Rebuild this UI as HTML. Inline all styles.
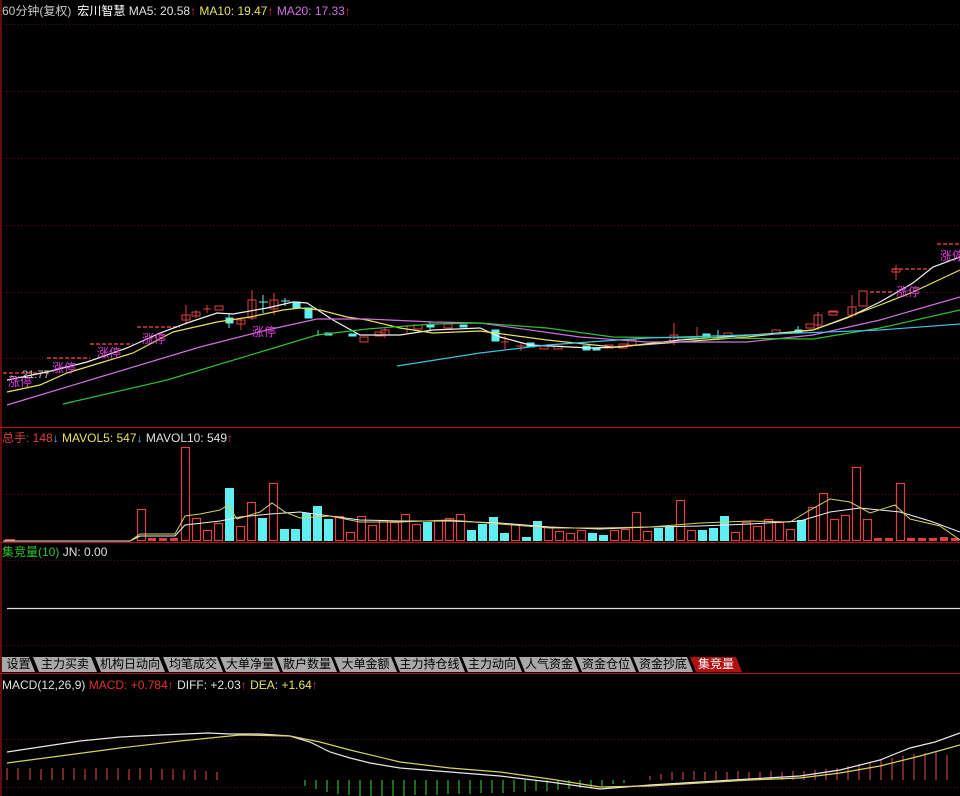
<!DOCTYPE html>
<html><head><meta charset="utf-8"><style>
html,body{margin:0;padding:0;background:#000;width:960px;height:796px;overflow:hidden}
body{position:relative;font-family:"Liberation Sans","Noto Sans CJK SC",sans-serif;font-size:12px}
.t{position:absolute;white-space:nowrap;font-size:12px;line-height:14px}
.tab{position:absolute;top:657px;height:15px;background:#a8a8a8;color:#000;font-size:12px;line-height:15px;text-align:center;clip-path:polygon(0 0,calc(100% - 6px) 0,100% 100%,6px 100%)}
</style></head><body>
<svg width="960" height="796" style="position:absolute;left:0;top:0" xmlns="http://www.w3.org/2000/svg">
<g stroke="#5a1010" stroke-dasharray="1,2" stroke-width="1">
<line x1="3" y1="24.5" x2="960" y2="24.5"/><line x1="3" y1="91.5" x2="960" y2="91.5"/><line x1="3" y1="158.5" x2="960" y2="158.5"/><line x1="3" y1="225.5" x2="960" y2="225.5"/><line x1="3" y1="292.5" x2="960" y2="292.5"/><line x1="3" y1="358.5" x2="960" y2="358.5"/>
<line x1="3" y1="494.5" x2="960" y2="494.5"/><line x1="3" y1="560.5" x2="960" y2="560.5"/><line x1="3" y1="645.5" x2="960" y2="645.5"/><line x1="3" y1="739.5" x2="960" y2="739.5"/><line x1="3" y1="787.5" x2="960" y2="787.5"/>
</g>
<g stroke="#a01818" stroke-width="1.2">
<line x1="1" y1="0" x2="1" y2="796"/>
<line x1="0" y1="427.5" x2="960" y2="427.5"/><line x1="0" y1="542.5" x2="960" y2="542.5"/><line x1="0" y1="673.5" x2="960" y2="673.5"/>
</g>
<g stroke="#d04040" stroke-dasharray="4,2" stroke-width="1.5">
<line x1="3" y1="373" x2="50" y2="373"/><line x1="47" y1="358" x2="90" y2="358"/><line x1="90" y1="344" x2="133" y2="344"/><line x1="137" y1="327" x2="180" y2="327"/><line x1="870" y1="292" x2="893" y2="292"/><line x1="893" y1="269" x2="930" y2="269"/><line x1="937" y1="244" x2="960" y2="244"/>
</g>
<g stroke="#e04040" fill="none" stroke-width="1">
<line x1="186" y1="305" x2="186" y2="323"/><rect x="182" y="315" width="8" height="5"/>
<line x1="196" y1="310" x2="196" y2="318"/><rect x="192" y="312" width="8" height="4"/>
<line x1="203" y1="309" x2="211" y2="309"/><line x1="207" y1="305" x2="207" y2="313"/>
<rect x="215" y="306" width="8" height="4"/>
<line x1="241" y1="318" x2="241" y2="330"/><rect x="237" y="320" width="8" height="4"/>
<line x1="252" y1="290" x2="252" y2="320"/><rect x="248" y="300" width="8" height="18"/>
<line x1="274" y1="293" x2="274" y2="315"/><rect x="270" y="300" width="8" height="9"/>
<rect x="360" y="337" width="8" height="5"/><rect x="375" y="332" width="8" height="4"/>
<line x1="385" y1="328" x2="385" y2="338"/><rect x="381" y="330" width="8" height="5"/>
<line x1="407" y1="325" x2="407" y2="333"/>
<rect x="414" y="325" width="8" height="4"/><rect x="444" y="324" width="8" height="4"/>
<line x1="505" y1="336" x2="505" y2="349"/><line x1="501" y1="342" x2="509" y2="342"/>
<line x1="521" y1="343" x2="521" y2="351"/><line x1="516" y1="346" x2="526" y2="346"/>
<rect x="540" y="346" width="8" height="3"/><rect x="554" y="346" width="8" height="3"/>
<rect x="605" y="345" width="8" height="3"/><rect x="619" y="344" width="8" height="4"/>
<rect x="628" y="340" width="8" height="5"/><line x1="674" y1="323" x2="674" y2="345"/><rect x="670" y="335" width="8" height="7"/>
<line x1="697" y1="327" x2="697" y2="338"/><rect x="724" y="333" width="8" height="3"/>
<rect x="772" y="330" width="8" height="4"/><rect x="806" y="324" width="8" height="4"/>
<line x1="818" y1="312" x2="818" y2="330"/><rect x="814" y="315" width="8" height="10"/>
<rect x="829" y="311" width="8" height="4"/><line x1="828" y1="312" x2="839" y2="312"/>
<line x1="852" y1="295" x2="852" y2="318"/><rect x="848" y="307" width="8" height="8"/>
<rect x="859" y="291" width="8" height="15"/>
<line x1="896" y1="265" x2="896" y2="280"/><rect x="892" y="269" width="8" height="3"/>
</g>
<g fill="#5ef0f0" stroke="#5ef0f0">
<rect x="226" y="318" width="7" height="5"/><line x1="229" y1="314" x2="229" y2="328"/>
<rect x="293" y="302" width="7" height="6"/><line x1="263" y1="295" x2="263" y2="313"/><line x1="259" y1="302" x2="268" y2="302"/>
<line x1="285" y1="298" x2="285" y2="306"/><line x1="281" y1="301" x2="290" y2="301"/>
<rect x="305" y="308" width="7" height="10"/><rect x="325" y="333" width="7" height="2"/><line x1="318" y1="330" x2="318" y2="336"/>
<rect x="349" y="334" width="7" height="2"/><rect x="492" y="330" width="7" height="11"/><rect x="527" y="343" width="7" height="4"/>
<rect x="583" y="346" width="7" height="4"/><rect x="593" y="348" width="7" height="2"/><rect x="460" y="325" width="7" height="2"/>
<rect x="703" y="334" width="7" height="3"/><line x1="718" y1="330" x2="718" y2="340"/><rect x="795" y="330" width="7" height="3"/><line x1="798" y1="326" x2="798" y2="332"/>
<line x1="430" y1="322" x2="430" y2="330"/><rect x="427" y="325" width="7" height="2"/>
</g>
<g fill="none" stroke-width="1.2">
<polyline stroke="#f0f0f0" points="7,380 47,372 87,362 127,348 160,333 187,323 217,313 233,314 267,308 293,302 307,303 333,320 360,335 400,335 433,330 480,328 500,337 530,345 590,348 620,347 680,340 780,333 813,330 847,318 880,302 913,283 933,267 960,257"/>
<polyline stroke="#e8e060" points="7,392 40,385 67,373 100,363 133,353 173,332 217,322 250,317 283,310 300,308 320,310 347,317 367,320 400,328 433,333 480,331 547,340 613,347 680,342 747,337 813,330 880,305 913,292 960,270"/>
<polyline stroke="#d070e0" points="7,405 100,377 200,347 267,330 317,319 367,319 433,322 480,323 580,337 647,342 747,342 813,335 880,320 960,297"/>
<polyline stroke="#30c030" points="63,404 167,380 267,350 317,335 367,329 433,324 480,323 547,328 613,337 713,338 813,339 880,328 960,310"/>
<polyline stroke="#40c0e0" points="397,366 480,353 547,345 647,338 747,335 880,330 960,324"/>
</g>
<g fill="#e040e0" font-family="Liberation Sans,Noto Sans CJK SC,sans-serif" font-size="12">
<text x="8" y="386">涨停</text><text x="52" y="372">涨停</text><text x="97" y="357">涨停</text><text x="142" y="343">涨停</text><text x="252" y="336">涨停</text><text x="896" y="296">涨停</text><text x="940" y="260">涨停</text>
</g>
<text x="8" y="378" fill="#c0c0c0" font-size="11" font-family="Liberation Sans,sans-serif">← 21.77</text>
<g stroke="#e04040" fill="none" stroke-width="1.2">
<rect x="137.5" y="509.5" width="8" height="31"/><rect x="181.5" y="447.5" width="8" height="93"/><rect x="192.5" y="518.5" width="8" height="22"/><rect x="203.5" y="530.5" width="8" height="10"/><rect x="214.5" y="523.5" width="8" height="17"/><rect x="236.5" y="526.5" width="8" height="14"/><rect x="247.5" y="502.5" width="8" height="38"/><rect x="269.5" y="483.5" width="8" height="57"/><rect x="335.5" y="516.5" width="8" height="24"/><rect x="346.5" y="532.5" width="8" height="8"/><rect x="357.5" y="516.5" width="8" height="24"/><rect x="368.5" y="525.5" width="8" height="15"/><rect x="379.5" y="520.5" width="8" height="20"/><rect x="390.5" y="522.5" width="8" height="18"/><rect x="401.5" y="514.5" width="8" height="26"/><rect x="412.5" y="524.5" width="8" height="16"/><rect x="434.5" y="520.5" width="8" height="20"/><rect x="445.5" y="518.5" width="8" height="22"/><rect x="456.5" y="514.5" width="8" height="26"/><rect x="511.5" y="524.5" width="8" height="16"/><rect x="544.5" y="527.5" width="8" height="13"/><rect x="555.5" y="531.5" width="8" height="9"/><rect x="566.5" y="533.5" width="8" height="7"/><rect x="577.5" y="530.5" width="8" height="10"/><rect x="610.5" y="530.5" width="8" height="10"/><rect x="621.5" y="529.5" width="8" height="11"/><rect x="632.5" y="512.5" width="8" height="28"/><rect x="643.5" y="531.5" width="8" height="9"/><rect x="676.5" y="500.5" width="8" height="40"/><rect x="687.5" y="530.5" width="8" height="10"/><rect x="731.5" y="532.5" width="8" height="8"/><rect x="742.5" y="522.5" width="8" height="18"/><rect x="753.5" y="526.5" width="8" height="14"/><rect x="764.5" y="519.5" width="8" height="21"/><rect x="775.5" y="522.5" width="8" height="18"/><rect x="786.5" y="529.5" width="8" height="11"/><rect x="808.5" y="507.5" width="8" height="33"/><rect x="819.5" y="493.5" width="8" height="47"/><rect x="830.5" y="519.5" width="8" height="21"/><rect x="841.5" y="515.5" width="8" height="25"/><rect x="852.5" y="467.5" width="8" height="73"/><rect x="863.5" y="519.5" width="8" height="21"/><rect x="896.5" y="483.5" width="8" height="57"/>
</g>
<g fill="#e04040"><rect x="148" y="538" width="8" height="3"/><rect x="159" y="538" width="8" height="3"/><rect x="170" y="538" width="8" height="3"/><rect x="874" y="538" width="8" height="3"/><rect x="885" y="538" width="8" height="3"/><rect x="907" y="538" width="8" height="3"/><rect x="918" y="538" width="8" height="3"/><rect x="929" y="538" width="8" height="3"/><rect x="940" y="537" width="8" height="4"/><rect x="951" y="538" width="8" height="3"/><rect x="5" y="539" width="10" height="2"/></g>
<g fill="#5ef0f0">
<rect x="225" y="488" width="9" height="53"/><rect x="258" y="518" width="9" height="23"/><rect x="280" y="529" width="9" height="12"/><rect x="291" y="529" width="9" height="12"/><rect x="302" y="513" width="9" height="28"/><rect x="313" y="506" width="9" height="35"/><rect x="324" y="519" width="9" height="22"/><rect x="423" y="522" width="9" height="19"/><rect x="467" y="530" width="9" height="11"/><rect x="478" y="524" width="9" height="17"/><rect x="489" y="517" width="9" height="24"/><rect x="500" y="533" width="9" height="8"/><rect x="522" y="537" width="9" height="4"/><rect x="533" y="521" width="9" height="20"/><rect x="588" y="533" width="9" height="8"/><rect x="599" y="535" width="9" height="6"/><rect x="654" y="528" width="9" height="13"/><rect x="665" y="527" width="9" height="14"/><rect x="698" y="530" width="9" height="11"/><rect x="709" y="528" width="9" height="13"/><rect x="720" y="516" width="9" height="25"/><rect x="797" y="520" width="9" height="21"/>
</g>
<g fill="none" stroke-width="1">
<polyline stroke="#f0f0f0" points="3,541 130,541 140,536 175,536 185,525 220,521 240,517 270,514 300,512 330,516 360,520 400,521 450,521 500,523 550,527 600,529 650,527 700,526 750,524 800,521 830,512 860,508 900,512 930,521 960,532"/>
<polyline stroke="#d8d060" points="130,541 140,534 175,534 185,516 200,514 220,510 228,505 237,519 260,512 272,503 285,512 300,518 330,516 360,522 400,522 450,520 500,524 550,528 600,528 650,527 700,523 750,521 790,522 810,510 830,499 850,502 870,513 895,505 910,519 940,526 960,540"/>
<line x1="7" y1="608.5" x2="960" y2="608.5" stroke="#e0e0e0" stroke-width="1.3"/>
</g>
<g stroke="#c04040" stroke-width="1.2">
<line x1="7" y1="768" x2="7" y2="780"/><line x1="18" y1="768" x2="18" y2="780"/><line x1="30" y1="768" x2="30" y2="780"/><line x1="41" y1="769" x2="41" y2="780"/><line x1="52" y1="768" x2="52" y2="780"/><line x1="63" y1="768" x2="63" y2="780"/><line x1="74" y1="768" x2="74" y2="780"/><line x1="85" y1="769" x2="85" y2="780"/><line x1="96" y1="768" x2="96" y2="780"/><line x1="107" y1="768" x2="107" y2="780"/><line x1="118" y1="768" x2="118" y2="780"/><line x1="129" y1="769" x2="129" y2="780"/><line x1="140" y1="768" x2="140" y2="780"/><line x1="151" y1="768" x2="151" y2="780"/><line x1="162" y1="769" x2="162" y2="780"/><line x1="173" y1="769" x2="173" y2="780"/><line x1="184" y1="770" x2="184" y2="780"/><line x1="195" y1="770" x2="195" y2="780"/><line x1="206" y1="771" x2="206" y2="780"/><line x1="217" y1="772" x2="217" y2="780"/>
<line x1="650" y1="776" x2="650" y2="780"/><line x1="661" y1="774" x2="661" y2="780"/><line x1="672" y1="772" x2="672" y2="780"/><line x1="683" y1="772" x2="683" y2="780"/><line x1="694" y1="771" x2="694" y2="780"/><line x1="705" y1="772" x2="705" y2="780"/><line x1="716" y1="771" x2="716" y2="780"/><line x1="727" y1="772" x2="727" y2="780"/><line x1="738" y1="771" x2="738" y2="780"/><line x1="749" y1="772" x2="749" y2="780"/><line x1="760" y1="772" x2="760" y2="780"/><line x1="771" y1="771" x2="771" y2="780"/><line x1="782" y1="772" x2="782" y2="780"/><line x1="793" y1="771" x2="793" y2="780"/><line x1="804" y1="771" x2="804" y2="780"/><line x1="815" y1="770" x2="815" y2="780"/><line x1="826" y1="769" x2="826" y2="780"/><line x1="837" y1="768" x2="837" y2="780"/><line x1="848" y1="766" x2="848" y2="780"/><line x1="859" y1="764" x2="859" y2="780"/><line x1="870" y1="762" x2="870" y2="780"/><line x1="881" y1="760" x2="881" y2="780"/><line x1="892" y1="758" x2="892" y2="780"/><line x1="903" y1="756" x2="903" y2="780"/><line x1="914" y1="754" x2="914" y2="780"/><line x1="925" y1="753" x2="925" y2="780"/><line x1="936" y1="752" x2="936" y2="780"/><line x1="947" y1="755" x2="947" y2="780"/>
</g>
<g stroke="#30b030" stroke-width="1.2">
<line x1="305" y1="780" x2="305" y2="786"/><line x1="316" y1="780" x2="316" y2="789"/><line x1="327" y1="780" x2="327" y2="792"/><line x1="338" y1="780" x2="338" y2="794"/><line x1="349" y1="780" x2="349" y2="795"/><line x1="360" y1="780" x2="360" y2="796"/><line x1="371" y1="780" x2="371" y2="796"/><line x1="382" y1="780" x2="382" y2="796"/><line x1="393" y1="780" x2="393" y2="796"/><line x1="404" y1="780" x2="404" y2="796"/><line x1="415" y1="780" x2="415" y2="795"/><line x1="426" y1="780" x2="426" y2="795"/><line x1="437" y1="780" x2="437" y2="795"/><line x1="448" y1="780" x2="448" y2="794"/><line x1="459" y1="780" x2="459" y2="794"/><line x1="470" y1="780" x2="470" y2="794"/><line x1="481" y1="780" x2="481" y2="793"/><line x1="492" y1="780" x2="492" y2="793"/><line x1="503" y1="780" x2="503" y2="793"/><line x1="514" y1="780" x2="514" y2="792"/><line x1="525" y1="780" x2="525" y2="792"/><line x1="536" y1="780" x2="536" y2="791"/><line x1="547" y1="780" x2="547" y2="791"/><line x1="558" y1="780" x2="558" y2="790"/><line x1="569" y1="780" x2="569" y2="789"/><line x1="580" y1="780" x2="580" y2="788"/><line x1="591" y1="780" x2="591" y2="787"/><line x1="602" y1="780" x2="602" y2="786"/><line x1="613" y1="780" x2="613" y2="784"/><line x1="624" y1="780" x2="624" y2="783"/>
</g>
<g fill="none" stroke-width="1.2">
<polyline stroke="#e8e8e8" points="7,752 40,747 80,741 120,737 160,735 208,733 230,734 260,734 290,736 310,742 330,752 350,758 370,763 400,768 450,772 500,776 550,782 600,789 650,785 700,782 750,779 800,776 840,770 880,760 910,748 935,742 960,733"/>
<polyline stroke="#d8d060" points="7,763 60,756 120,748 180,741 240,735 290,736 320,742 350,750 400,762 450,768 500,772 550,779 600,787 650,786 700,783 750,780 800,778 840,773 880,766 920,756 960,745"/>
</g>
</svg>
<div class="t" style="left:2px;top:4px;color:#c8c8c8">60分钟(复权)<span style="margin-left:6px;color:#fff">宏川智慧</span> <span style="color:#e0e0e0">MA5: 20.58</span><span style="color:#e03030">↑</span> <span style="color:#e8e060">MA10: 19.47</span><span style="color:#e03030">↑</span> <span style="color:#d070e0">MA20: 17.33</span><span style="color:#e03030">↑</span></div>
<div class="t" style="left:2px;top:431px;color:#e04040">总手: 148<span style="color:#40c0e0">↓</span> <span style="color:#e8e060">MAVOL5: 547</span><span style="color:#40c0e0">↓</span> <span style="color:#e0e0e0">MAVOL10: 549</span><span style="color:#e03030">↑</span></div>
<div class="t" style="left:2px;top:545px;color:#30c030">集竞量(10) <span style="color:#e0e0e0">JN: 0.00</span></div>
<div class="t" style="left:2px;top:678px;color:#e0e0e0">MACD(12,26,9) <span style="color:#e03030">MACD: +0.784↑</span> DIFF: +2.03<span style="color:#e03030">↑</span> <span style="color:#e8e060">DEA: +1.64</span><span style="color:#e03030">↑</span></div>
<div class="tab" style="left:2px;width:33px;clip-path:polygon(0 0,calc(100% - 6px) 0,100% 100%,0 100%)">设置</div>
<div class="tab" style="left:33px;width:64px">主力买卖</div>
<div class="tab" style="left:95px;width:70px">机构日动向</div>
<div class="tab" style="left:163px;width:60px">均笔成交</div>
<div class="tab" style="left:220px;width:60px">大单净量</div>
<div class="tab" style="left:277px;width:60px">散户数量</div>
<div class="tab" style="left:334px;width:63px">大单金额</div>
<div class="tab" style="left:394px;width:71px">主力持仓线</div>
<div class="tab" style="left:462px;width:60px">主力动向</div>
<div class="tab" style="left:519px;width:60px">人气资金</div>
<div class="tab" style="left:576px;width:60px">资金仓位</div>
<div class="tab" style="left:633px;width:60px">资金抄底</div>
<div class="tab" style="left:690px;width:52px;background:#b01010;color:#fff">集竞量</div>
</body></html>
